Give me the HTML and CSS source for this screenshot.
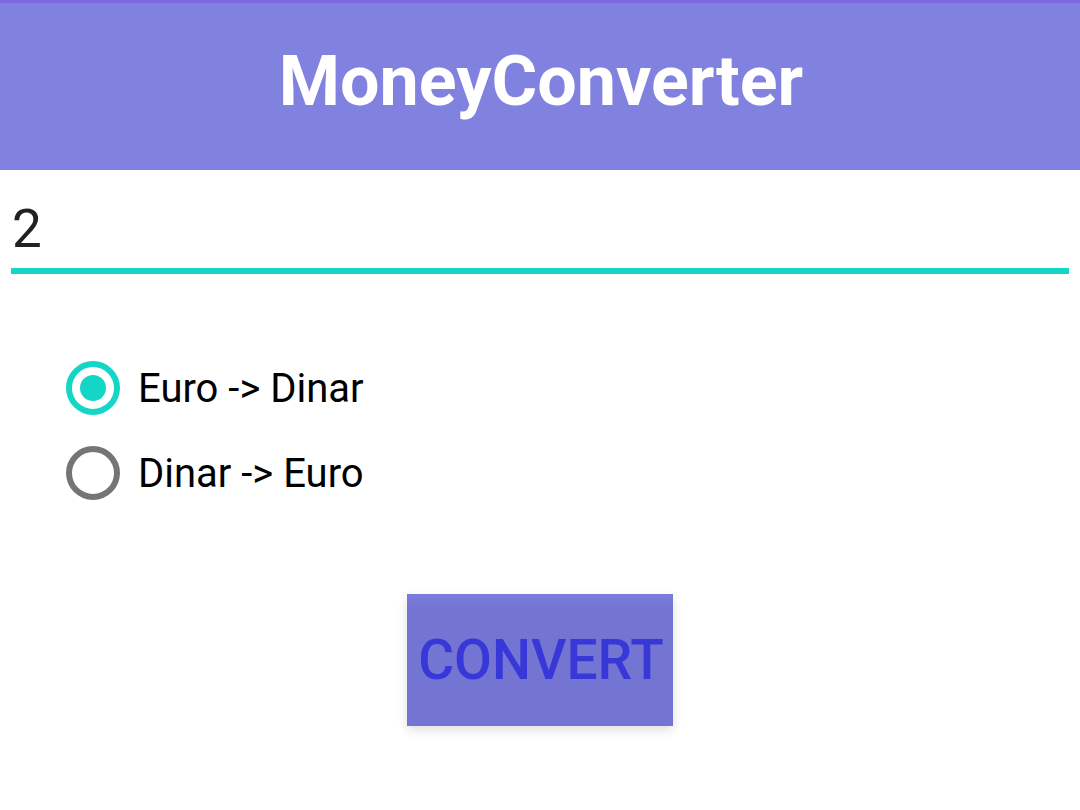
FILE: index.html
```html
<!DOCTYPE html>
<html>
<head>
<meta charset="utf-8">
<link rel="stylesheet" href="styles.css">
</head>
<body>
<header class="appbar"><h1 class="title">MoneyConverter</h1></header>
<main class="content">
  <div class="field"><span class="value">2</span></div>
  <div class="radios">
    <div class="radio-row">
      <span class="radio checked"><span class="dot"></span></span>
      <span class="label">Euro -&gt; Dinar</span>
    </div>
    <div class="radio-row">
      <span class="radio"></span>
      <span class="label">Dinar -&gt; Euro</span>
    </div>
  </div>
  <div class="btn-wrap"><div class="btn">CONVERT</div></div>
</main>
</body>
</html>
```
FILE: styles.css
```css
html, body { margin: 0; padding: 0; background: #fff; }
body { font-family: Roboto, "Noto Sans", sans-serif; width: 1080px; height: 810px; overflow: hidden; }
.appbar {
  height: 170px;
  background: #8181e0;
  border-top: 3px solid #7c68e0;
  box-sizing: border-box;
  display: flex;
  align-items: center;
  justify-content: center;
}
.title {
  margin: 0;
  color: #fff;
  font-weight: 700;
  font-size: 70px;
  letter-spacing: 0;
  position: relative;
  top: -6px;
  left: 1px;
}
.content { padding: 0 11px; }
.field {
  height: 104px;
  border-bottom: 6px solid #14d6c6;
  box-sizing: border-box;
  display: flex;
  align-items: flex-end;
}
.value {
  font-size: 53px;
  color: #222;
  line-height: 1;
  margin-bottom: 12px;
  padding-left: 1px;
}
.radios { padding: 87px 0 0 55px; display: flex; flex-direction: column; gap: 31px; }
.radio-row { display: flex; align-items: center; height: 54px; }
.radio {
  width: 54px; height: 54px;
  box-sizing: border-box;
  border: 6px solid #757575;
  border-radius: 50%;
  display: flex; align-items: center; justify-content: center;
}
.radio.checked { border-color: #14d6c6; }
.dot { width: 26px; height: 26px; border-radius: 50%; background: #14d6c6; }
.label { font-size: 40px; color: #000; margin-left: 18px; }
.btn-wrap { display: flex; justify-content: center; padding-top: 94px; }
.btn {
  width: 266px; height: 132px;
  background: #7676d6;
  color: #3838d8;
  font-weight: 500;
  font-size: 55px;
  padding-left: 2px;
  box-sizing: border-box;
  display: flex; align-items: center; justify-content: center;
  box-shadow: 0 4px 10px rgba(0,0,0,0.12);
  background-image: linear-gradient(#7c7cdc 0, #7474d3 14px);
}
```
